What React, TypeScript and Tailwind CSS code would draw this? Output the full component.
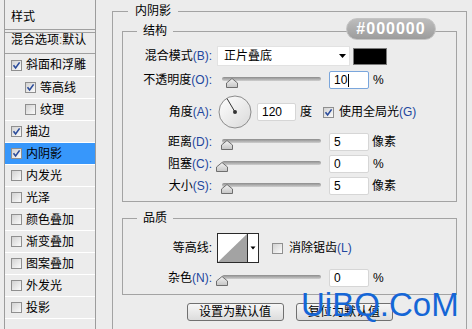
import React from "react";

const KEY = "text-[#22469e]";

function Check({ checked }: { checked?: boolean }) {
  return (
    <span className="w-[11px] h-[11px] shrink-0 border border-[#8f8f8f] bg-linear-to-br from-[#d2d2d2] to-[#fbfbfb] flex items-center justify-center">
      {checked && (
        <svg width="9" height="9" viewBox="0 0 9 9">
          <path d="M1.5 4.2 L3.6 7 L7.6 1.4" fill="none" stroke="#2a4b9b" strokeWidth="1.6" />
        </svg>
      )}
    </span>
  );
}

function Label({ cn, k }: { cn: string; k?: string }) {
  return (
    <span className="w-[75px] shrink-0 text-right whitespace-nowrap">
      {cn}
      {k ? <span className={KEY}>({k}):</span> : ":"}
    </span>
  );
}

function Slider({ thumb }: { thumb: number }) {
  return (
    <div className="relative ml-[5px] w-[104px] h-[18px] shrink-0">
      <div className="absolute left-[5px] right-0 top-[6px] h-[4px] rounded-full bg-linear-to-b from-[#8c8c8c] to-[#cfcfcf]" />
      <svg
        className="absolute top-[7px]"
        style={{ left: thumb }}
        width="12"
        height="10"
        viewBox="0 0 12 10"
      >
        <defs>
          <linearGradient id="tg" x1="0" y1="0" x2="0" y2="1">
            <stop offset="0" stopColor="#f4f4f4" />
            <stop offset="1" stopColor="#c4c4c4" />
          </linearGradient>
        </defs>
        <path d="M0.5 9.5 L0.5 5 L6 0.5 L11.5 5 L11.5 9.5 Z" fill="url(#tg)" stroke="#6e6e6e" />
      </svg>
    </div>
  );
}

function Input({ v, focus, className = "" }: { v: string; focus?: boolean; className?: string }) {
  return (
    <div
      className={`h-[18px] shrink-0 bg-white rounded-[2px] border flex items-center pl-[4px] text-[12px] leading-[16px] ${
        focus ? "border-[#7aa6dc]" : "border-[#d6d6d6]"
      } ${className}`}
    >
      {v}
      {focus && <span className="w-px h-[13px] bg-black ml-px" />}
    </div>
  );
}

const items: { t: string; c: boolean; ind?: boolean; sel?: boolean }[] = [
  { t: "斜面和浮雕", c: true },
  { t: "等高线", c: true, ind: true },
  { t: "纹理", c: false, ind: true },
  { t: "描边", c: true },
  { t: "内阴影", c: true, sel: true },
  { t: "内发光", c: false },
  { t: "光泽", c: false },
  { t: "颜色叠加", c: false },
  { t: "渐变叠加", c: false },
  { t: "图案叠加", c: false },
  { t: "外发光", c: false },
  { t: "投影", c: false },
];

export default function App() {
  return (
    <div className="w-[472px] h-[329px] bg-[#ececec] relative overflow-hidden flex text-[12px] text-black font-['Liberation_Sans','Noto_Sans_CJK_SC',sans-serif]">
      {/* left list */}
      <div className="ml-[4px] w-[92px] h-full shrink-0 border-x border-[#9c9c9c] flex flex-col">
        <div className="h-[30px] border-b border-[#a0a0a0] pl-[6px] pt-[10px] leading-[14px]">样式</div>
        <div className="h-[2px]" />
        <div className="h-[22px] border-y border-[#a0a0a0] pl-[6px] leading-[14px] whitespace-nowrap">
          混合选项<span className="text-[#9a6c1c]">:</span>默认
        </div>
        {items.map((it, i) => (
          <div
            key={it.t}
            className={`${i === 0 ? "h-[23px]" : "h-[22px]"} border-b border-white flex items-center gap-[4px] ${
              it.ind ? "pl-[20px]" : "pl-[6px]"
            } ${it.sel ? "bg-[#3797fb]" : ""}`}
          >
            <Check checked={it.c} />
            <span className="leading-[14px]">{it.t}</span>
          </div>
        ))}
      </div>

      {/* right */}
      <fieldset className="ml-[16px] mt-[3px] w-[355px] shrink-0 border border-[#a3a3a3] pl-[9px] pb-[30px] self-start">
        <legend className="ml-[6px] px-[7px] leading-[16px]">内阴影</legend>

        <fieldset className="mt-[4px] w-[335px] border border-[#a3a3a3] pl-[14px] pb-[6px]">
          <legend className="px-[6px] leading-[16px]">结构</legend>

          <div className="flex items-center h-[20px] mt-[7px]">
            <Label cn="混合模式" k="B" />
            <div className="ml-[5px] w-[133px] h-[20px] bg-white border border-[#e2e2e2] flex items-center pl-[6px]">
              <span>正片叠底</span>
              <svg className="ml-auto mr-[3px]" width="7" height="4" viewBox="0 0 7 4">
                <path d="M0 0 L7 0 L3.5 4 Z" fill="#000" />
              </svg>
            </div>
            <div className="ml-[3px] w-[34px] h-[17px] bg-black border border-[#7a7a7a]" />
          </div>

          <div className="flex items-center h-[18px] mt-[5px]">
            <Label cn="不透明度" k="O" />
            <Slider thumb={9} />
            <Input v="10" focus className="ml-[8px] w-[40px]" />
            <span className="ml-[4px]">%</span>
          </div>

          <div className="flex items-center h-[34px] mt-[6px]">
            <Label cn="角度" k="A" />
            <svg className="ml-[5px] shrink-0" width="36" height="34" viewBox="0 0 36 34">
              <defs>
                <linearGradient id="dg" x1="0" y1="0" x2="1" y2="1">
                  <stop offset="0" stopColor="#ffffff" />
                  <stop offset="1" stopColor="#d9d9d9" />
                </linearGradient>
              </defs>
              <circle cx="18" cy="17" r="16" fill="url(#dg)" stroke="#8c8c8c" />
              <line x1="18" y1="17" x2="10" y2="3.5" stroke="#333" strokeWidth="1" />
              <circle cx="18" cy="17" r="2" fill="#333" />
            </svg>
            <Input v="120" className="ml-[4px] w-[39px]" />
            <span className="ml-[4px]">度</span>
            <span className="ml-[11px]">
              <Check checked />
            </span>
            <span className="ml-[5px] whitespace-nowrap">
              使用全局光<span className={KEY}>(G)</span>
            </span>
          </div>

          <div className="flex items-center h-[18px] mt-[4px]">
            <Label cn="距离" k="D" />
            <Slider thumb={4} />
            <Input v="5" className="ml-[8px] w-[40px]" />
            <span className="ml-[3px]">像素</span>
          </div>

          <div className="flex items-center h-[18px] mt-[4px]">
            <Label cn="阻塞" k="C" />
            <Slider thumb={-1} />
            <Input v="0" className="ml-[8px] w-[40px]" />
            <span className="ml-[4px]">%</span>
          </div>

          <div className="flex items-center h-[18px] mt-[4px]">
            <Label cn="大小" k="S" />
            <Slider thumb={4} />
            <Input v="5" className="ml-[8px] w-[40px]" />
            <span className="ml-[3px]">像素</span>
          </div>
        </fieldset>

        <fieldset className="mt-[8px] w-[335px] border border-[#a3a3a3] pl-[14px] pb-[7px]">
          <legend className="px-[6px] leading-[16px]">品质</legend>

          <div className="flex items-center h-[30px] mt-[7px]">
            <Label cn="等高线" />
            <svg className="ml-[5px] shrink-0" width="42" height="30" viewBox="0 0 42 30">
              <rect x="0.5" y="0.5" width="41" height="29" fill="#fff" stroke="#2a2a2a" />
              <path d="M1 29 L30 1 L30 29 Z" fill="#a3a3a3" />
              <line x1="30.5" y1="0.5" x2="30.5" y2="29.5" stroke="#2a2a2a" />
              <path d="M33.5 13.5 L38.5 13.5 L36 16.5 Z" fill="#000" />
            </svg>
            <span className="ml-[13px]">
              <Check />
            </span>
            <span className="ml-[6px] whitespace-nowrap">
              消除锯齿<span className={KEY}>(L)</span>
            </span>
          </div>

          <div className="flex items-center h-[18px] mt-[6px]">
            <Label cn="杂色" k="N" />
            <Slider thumb={-1} />
            <Input v="0" className="ml-[8px] w-[40px]" />
            <span className="ml-[4px]">%</span>
          </div>
        </fieldset>

        <div className="w-[335px] mt-[8px] flex justify-center gap-[12px]">
          <div className="w-[97px] h-[18px] border border-[#707070] rounded-[3px] bg-linear-to-b from-[#f7f7f7] to-[#dcdcdc] flex items-center justify-center leading-[14px]">
            设置为默认值
          </div>
          <div className="w-[97px] h-[18px] border border-[#707070] rounded-[3px] bg-linear-to-b from-[#f7f7f7] to-[#dcdcdc] flex items-center justify-center leading-[14px]">
            复位为默认值
          </div>
        </div>
      </fieldset>

      {/* color badge */}
      <div className="absolute left-[346px] top-[18px] w-[90px] h-[22px] rounded-full border border-[#c4c4c4] bg-linear-to-b from-[#bdbdbd] to-[#9c9c9c] flex items-center justify-center text-white font-bold text-[16px] tracking-[1px] leading-none">
        #000000
      </div>

      {/* watermark */}
      <div className="absolute left-[301px] top-[288px] text-[33px] leading-[33px] text-[#1566d6] font-['Liberation_Sans',sans-serif] whitespace-nowrap">
        UiBQ.CoM
      </div>
    </div>
  );
}
